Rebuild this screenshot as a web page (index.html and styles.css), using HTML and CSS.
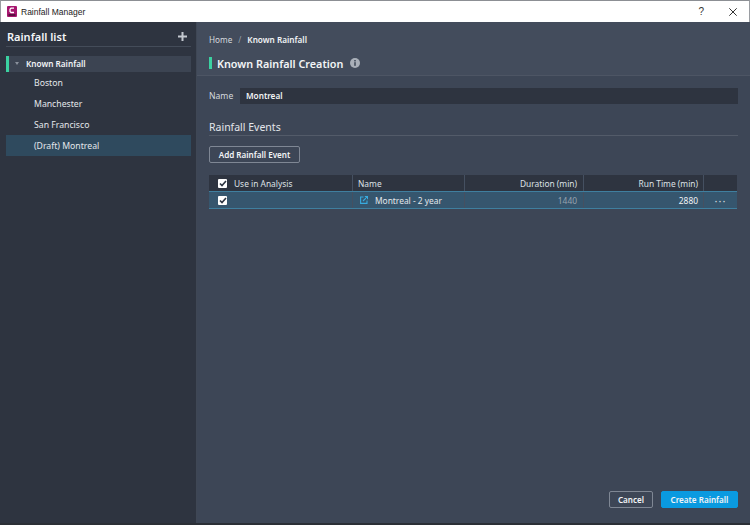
FILE: index.html
```html
<!DOCTYPE html>
<html lang="en">
<head>
<meta charset="utf-8">
<title>Rainfall Manager</title>
<link rel="stylesheet" href="styles.css">
</head>
<body>
<div class="window">
  <header class="titlebar">
    <svg class="app-icon" width="10" height="11" viewBox="0 0 10 11"><rect width="10" height="11" rx="1" fill="#a6166f"/><rect x="1.5" y="8" width="7" height="2" fill="#5c0d40"/><path d="M7 2.2H4L3 3.2v2.3l1 1h3" fill="none" stroke="#fff" stroke-width="1.3"/></svg>
    <span class="app-title">Rainfall Manager</span>
    <span class="help">?</span>
    <svg class="close" width="8" height="8" viewBox="0 0 8 8"><path d="M.3.3l7.4 7.4M7.7.3L.3 7.7" stroke="#333" stroke-width="1" fill="none"/></svg>
  </header>
  <div class="app">
    <aside class="sidebar">
      <div class="side-head">
        <h2>Rainfall list</h2>
        <svg width="9" height="9" viewBox="0 0 9 9"><path d="M4.5 0v9M0 4.5h9" stroke="#c3c8cf" stroke-width="2" fill="none"/></svg>
      </div>
      <div class="group">
        <span class="marker"></span>
        <div class="group-row"><span class="caret"></span>Known Rainfall</div>
      </div>
      <ul class="list">
        <li>Boston</li>
        <li>Manchester</li>
        <li>San Francisco</li>
        <li class="selected">(Draft) Montreal</li>
      </ul>
    </aside>
    <main class="main">
      <section class="head">
        <nav class="crumbs"><span class="home">Home</span><span class="sep">/</span><b>Known Rainfall</b></nav>
        <div class="page-title">
          <span class="title-mark"></span>
          <h1>Known Rainfall Creation</h1>
          <svg width="10" height="10" viewBox="0 0 11 11"><circle cx="5.5" cy="5.5" r="5.5" fill="#a9afb8"/><rect x="4.6" y="4.6" width="1.8" height="4" fill="#444d5c"/><rect x="4.6" y="2.2" width="1.8" height="1.6" fill="#444d5c"/></svg>
        </div>
      </section>
      <section class="content">
        <div class="name-row">
          <label>Name</label>
          <div class="input">Montreal</div>
        </div>
        <h3 class="section-title">Rainfall Events</h3>
        <button class="btn add">Add Rainfall Event</button>
        <div class="table">
          <div class="row thead">
            <div class="cell c1"><span class="check"><svg width="8" height="7" viewBox="0 0 8 7"><path d="M1 3.5l2 2L7 1" fill="none" stroke="#2b3340" stroke-width="1.6"/></svg></span>Use in Analysis</div>
            <div class="cell c2">Name</div>
            <div class="cell c3">Duration (min)</div>
            <div class="cell c4">Run Time (min)</div>
            <div class="cell c5"></div>
          </div>
          <div class="row tbody">
            <div class="cell c1"><span class="check"><svg width="8" height="7" viewBox="0 0 8 7"><path d="M1 3.5l2 2L7 1" fill="none" stroke="#2b3340" stroke-width="1.6"/></svg></span></div>
            <div class="cell c2 link"><svg width="8" height="8" viewBox="0 0 8 8"><path d="M3.5 1H.6v6.4H7V4.5M3 5l4.4-4.4M4.8.5h2.7v2.7" fill="none" stroke="#38abdf" stroke-width="1.1"/></svg>Montreal - 2 year</div>
            <div class="cell c3 dim">1440</div>
            <div class="cell c4">2880</div>
            <div class="cell c5 more">···</div>
          </div>
        </div>
        <footer class="actions">
          <button class="btn cancel">Cancel</button>
          <button class="btn primary">Create Rainfall</button>
        </footer>
      </section>
    </main>
  </div>
</div>
</body>
</html>
```
FILE: styles.css
```css
* { box-sizing: border-box; }
html, body { margin: 0; padding: 0; height: 100%; }
body { font-family: "Noto Sans", "Open Sans", sans-serif; color: #f2f4f6; font-size: 8.6px; overflow: hidden; }
.window { width: 750px; height: 525px; display: flex; flex-direction: column; background: #2b2f36; }
.titlebar { height: 22px; flex: none; background: #fff; border-top: 1px solid #8c8f94; border-left: 1px solid #9a9da2; border-right: 1px solid #9a9da2; display: flex; align-items: center; padding: 0 12px 0 6px; color: #333; }
.app-icon { flex: none; }
.app-title { margin-left: 4px; font-family: "Liberation Sans", sans-serif; font-size: 8.5px; color: #222; flex: 1; }
.help { font-family: "Liberation Sans", sans-serif; font-size: 10px; color: #333; margin-right: 25px; }
.app { flex: none; height: 501px; display: flex; min-height: 0; }
.sidebar { width: 197px; flex: none; background: #2e3440; border-right: 1px solid #3f4755; padding: 0 6px; }
.side-head { height: 20px; margin-top: 5px; display: flex; align-items: center; justify-content: space-between; border-bottom: 1px solid #444c59; padding: 0 4px 0 1px; width: 185px; }
.side-head h2 { margin: 0; font-size: 11px; font-weight: 600; color: #f4f6f8; line-height: 16px; }
.group { display: flex; height: 16px; margin-top: 9px; width: 185px; }
.marker { width: 3px; background: #3bd1a1; flex: none; }
.group-row { flex: 1; background: #3c4452; display: flex; align-items: center; padding: 0 0 2px 6px; font-weight: 600; font-size: 8.2px; }
.caret { width: 0; height: 0; border-left: 2.5px solid transparent; border-right: 2.5px solid transparent; border-top: 3px solid #8a919c; margin-right: 7px; }
.list { list-style: none; margin: 0; padding: 0; width: 185px; }
.list li { height: 21px; line-height: 21px; padding: 1px 0 0 28px; font-size: 8.7px; color: #e4e7eb; }
.list li.selected { background: #2f4a5e; }
.main { flex: 1; background: #3d4656; display: flex; flex-direction: column; min-width: 0; }
.head { height: 54px; flex: none; background: #434c5c; border-bottom: 1px solid #4d5564; padding: 0 12px; }
.crumbs { display: flex; align-items: center; height: 16px; margin-top: 9px; font-size: 8.2px; }
.crumbs .home { color: #d5d9de; }
.crumbs .sep { margin: 0 6px; color: #99a0ab; }
.crumbs b { font-weight: 600; }
.page-title { display: flex; align-items: center; margin-top: 7px; height: 18px; }
.title-mark { width: 3px; height: 12px; background: #3bd1a1; margin-right: 5px; }
.page-title h1 { margin: 0 7px 0 0; font-size: 10.8px; font-weight: 600; }
.content { flex: 1; display: flex; flex-direction: column; padding: 12px 12px 15px; }
.name-row { display: flex; align-items: center; height: 16px; }
.name-row label { width: 31px; font-size: 8.6px; color: #d5d9de; }
.input { flex: 1; height: 16px; background: #2e3440; line-height: 16px; padding-left: 6px; font-weight: 600; font-size: 8.2px; }
.section-title { margin: 16px 0 0; font-size: 10.5px; font-weight: 400; color: #e4e7eb; height: 16px; line-height: 14px; border-bottom: 1px solid #535b69; }
.btn { font-family: inherit; font-size: 8.1px; font-weight: 600; color: #f2f4f6; background: transparent; border: 1px solid #7f8794; border-radius: 2px; }
.add { align-self: flex-start; width: 91px; height: 17px; margin-top: 10px; padding: 0; }
.table { margin-top: 12px; margin-right: 1px; }
.row { display: flex; }
.thead { height: 16px; background: #2e3440; }
.tbody { height: 18px; background: #36566e; border-top: 1px solid #3f7f9f; border-bottom: 1px solid #3f7f9f; }
.cell { display: flex; align-items: center; height: 100%; padding: 0 6px; font-size: 8.4px; border-right: 1px solid #455061; white-space: nowrap; }
.thead .cell { color: #dde1e6; }
.c1 { width: 144px; padding-left: 9px; }
.c2 { width: 112px; padding-left: 5px; }
.c3 { width: 119px; justify-content: flex-end; }
.c4 { width: 120px; justify-content: flex-end; padding-right: 5px; }
.c5 { flex: 1; border-right: 0; }
.check { width: 9px; height: 9px; background: #fff; border-radius: 1px; display: inline-flex; align-items: center; justify-content: center; margin-right: 7px; }
.link { padding-left: 7px; color: #e4e7eb; }
.link svg { margin-right: 7px; }
.dim { color: #98a3af; }
.more { justify-content: center; font-size: 11px; font-weight: 400; color: #d5d9de; letter-spacing: 1px; }
.actions { margin-top: auto; display: flex; justify-content: flex-end; gap: 8px; }
.cancel { width: 44px; height: 17px; padding: 0; }
.primary { width: 77px; height: 17px; padding: 0; background: #0a9ae0; border-color: #0a9ae0; }
```
